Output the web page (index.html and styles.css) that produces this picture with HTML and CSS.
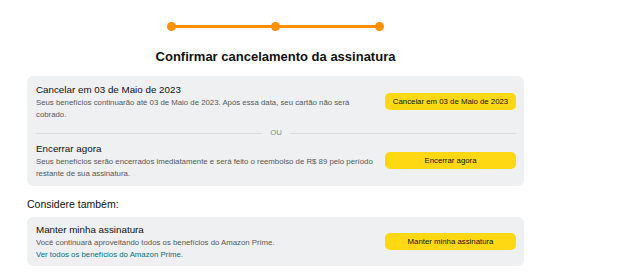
FILE: index.html
```html
<!DOCTYPE html>
<html lang="pt-BR">
<head>
<meta charset="utf-8">
<title>Confirmar cancelamento da assinatura</title>
<link rel="stylesheet" href="styles.css">
</head>
<body>
<div class="page">
  <div class="progress">
    <span class="dot"></span>
    <span class="bar"></span>
    <span class="dot"></span>
    <span class="bar"></span>
    <span class="dot"></span>
  </div>
  <h1 class="heading">Confirmar cancelamento da assinatura</h1>

  <div class="card">
    <div class="row">
      <div class="info">
        <div class="title">Cancelar em 03 de Maio de 2023</div>
        <p class="desc">Seus benefícios continuarão até 03 de Maio de 2023. Após essa data, seu cartão não será cobrado.</p>
      </div>
      <button class="btn">Cancelar em 03 de Maio de 2023</button>
    </div>
    <div class="divider"><span class="line"></span><span class="or">OU</span><span class="line"></span></div>
    <div class="row">
      <div class="info">
        <div class="title">Encerrar agora</div>
        <p class="desc">Seus benefícios serão encerrados imediatamente e será feito o reembolso de R$ 89 pelo período restante de sua assinatura.</p>
      </div>
      <button class="btn">Encerrar agora</button>
    </div>
  </div>

  <h2 class="sub">Considere também:</h2>

  <div class="card card-small">
    <div class="row">
      <div class="info">
        <div class="title">Manter minha assinatura</div>
        <p class="desc">Você continuará aproveitando todos os benefícios do Amazon Prime.<br><a class="link" href="#">Ver todos os benefícios do Amazon Prime.</a></p>
      </div>
      <button class="btn">Manter minha assinatura</button>
    </div>
  </div>
</div>
</body>
</html>
```

FILE: styles.css
```css
* { box-sizing: border-box; }
body {
  margin: 0;
  background: #fff;
  font-family: "Liberation Sans", Arial, sans-serif;
  color: #0f1111;
}
.page {
  width: 497px;
  margin-left: 27px;
  padding-top: 21px;
}
.progress {
  display: flex;
  align-items: center;
  justify-content: center;
  height: 10px;
}
.dot {
  width: 9px;
  height: 9px;
  border-radius: 50%;
  background: #ff9100;
  flex: none;
}
.bar {
  width: 97px;
  height: 3px;
  background: #ff9100;
  margin: 0 -1px;
}
.heading {
  margin: 16px 0 0;
  font-size: 13px;
  line-height: 20px;
  font-weight: bold;
  text-align: center;
}
.card {
  margin-top: 9px;
  background: #eff0f1;
  border-radius: 6px;
  padding: 7px 8px 7px 9px;
}
.row {
  display: flex;
  align-items: center;
  gap: 6px;
}
.info { flex: 1; min-width: 0; }
.title {
  font-size: 9.8px;
  line-height: 13px;
}
.desc {
  margin: 1px 0 0;
  font-size: 7.8px;
  line-height: 11.5px;
  color: #565959;
}
.link { color: #007185; text-decoration: none; }
.btn {
  flex: none;
  width: 131px;
  height: 17px;
  border: none;
  border-radius: 5px;
  background: #ffd814;
  font-family: inherit;
  font-size: 7.8px;
  color: #0f1111;
  padding: 0;
}
.divider {
  display: flex;
  align-items: center;
  gap: 8px;
  margin: 8px 0 4px;
}
.line { flex: 1; height: 1px; background: #dcdddd; }
.or {
  font-size: 7.8px;
  color: #8a8d8d;
  line-height: 10px;
}
.sub {
  margin: 11px 0 0;
  font-size: 10.5px;
  font-weight: normal;
  line-height: 14px;
}
.card-small {
  margin-top: 6px;
  padding: 6px 8px 6px 9px;
}
```
